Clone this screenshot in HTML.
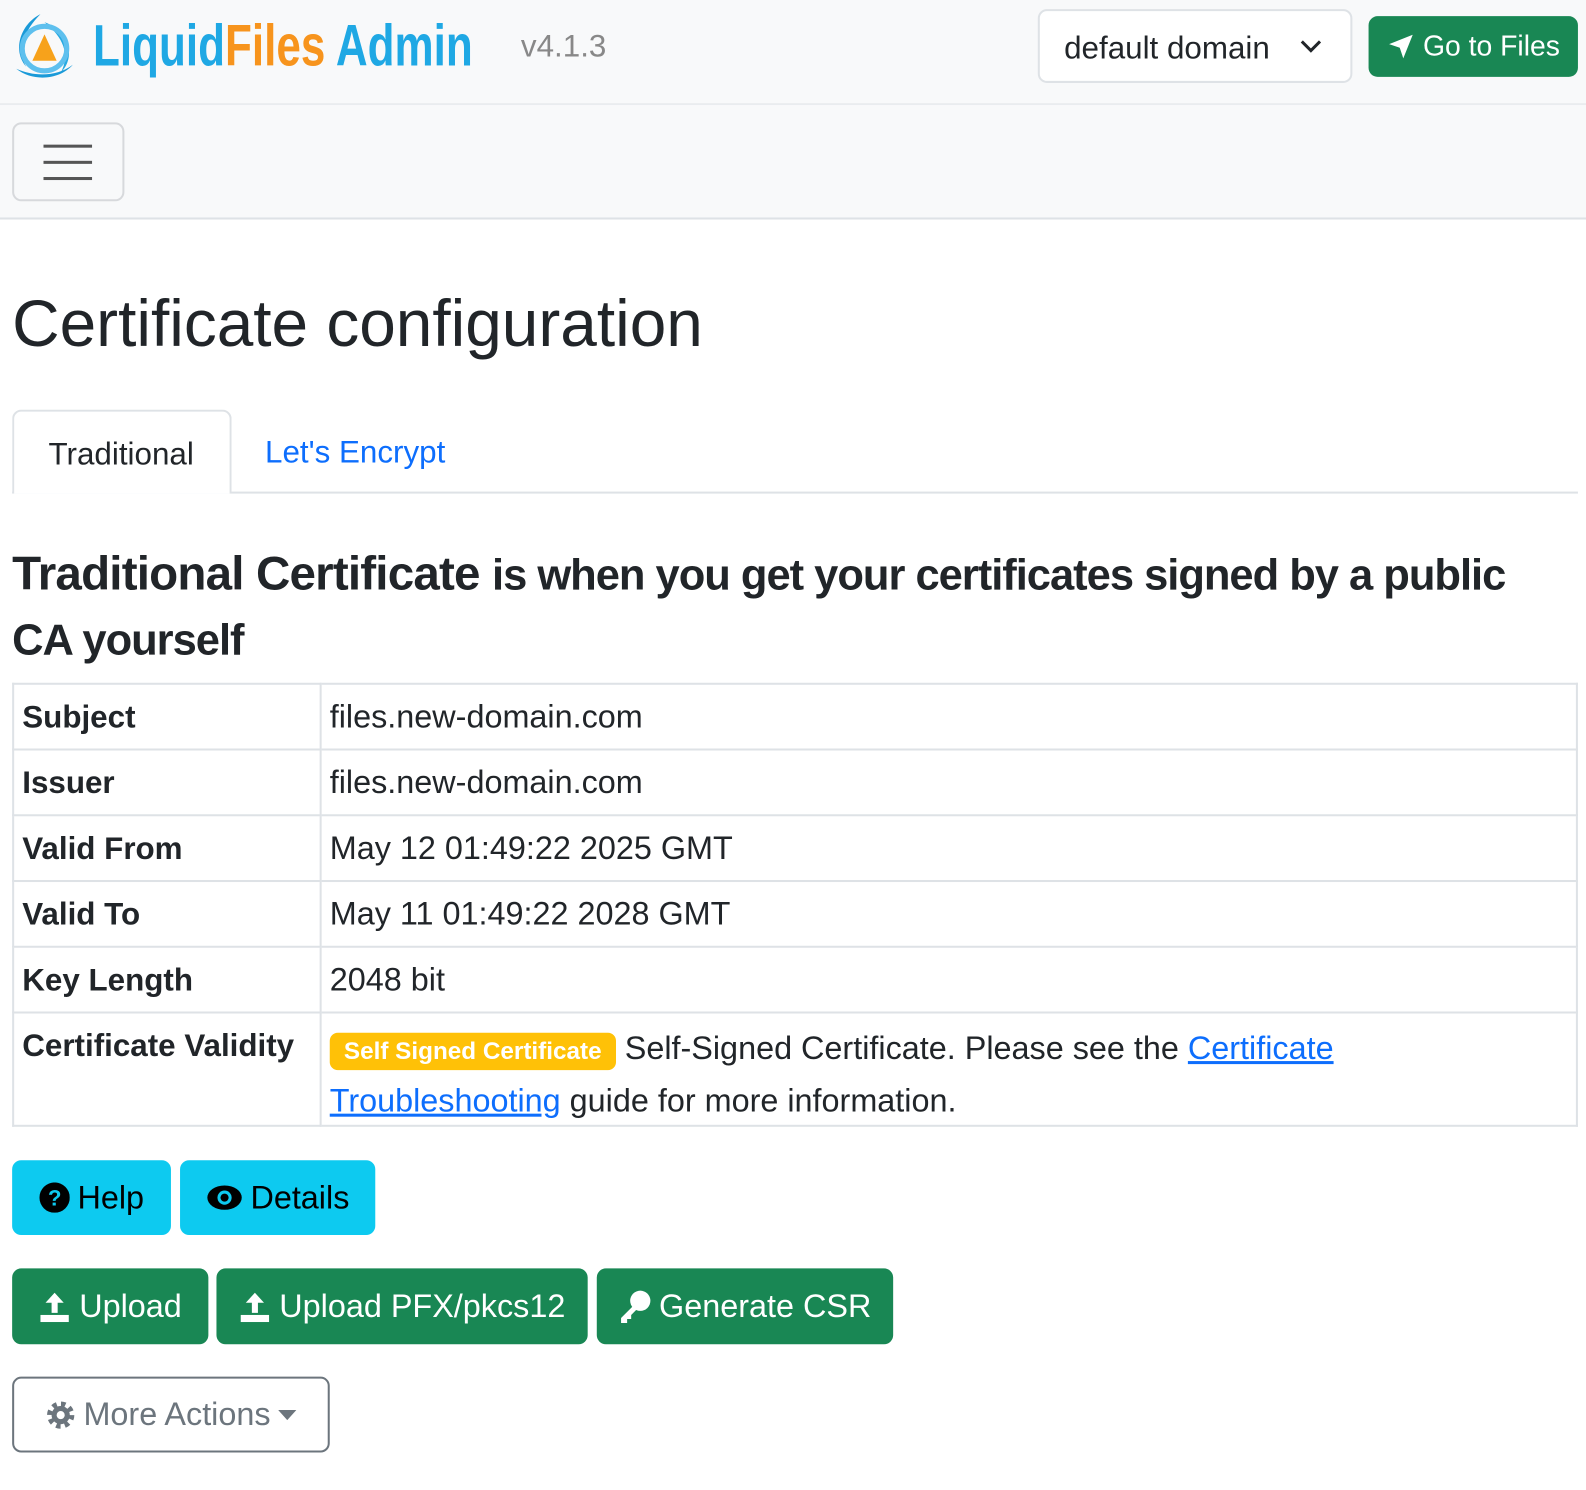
<!DOCTYPE html>
<html><head><meta charset="utf-8"><style>
*{box-sizing:border-box}
body{margin:0;width:1586px;height:1490px;background:#fff;font-family:"Liberation Sans",Helvetica,Arial,sans-serif;color:#212529;overflow:hidden;position:relative}
#w{position:absolute;left:0;top:0;width:1568px;height:1473px;transform:scale(1.0115);transform-origin:0 0}
.abs{position:absolute}
.hdr{left:0;top:0;width:1586px;height:104px;background:#f8f9fa;border-bottom:2px solid #e9ecef}
.nav2{left:0;top:104px;width:1586px;height:113px;background:#f8f9fa;border-bottom:2px solid #dee2e6}
.btn{position:absolute;border-radius:9px;font-size:32px;display:flex;align-items:center;justify-content:center;gap:8px}
.green{background:#198754;color:#fff}
.cyan{background:#0dcaf0;color:#000}
table{position:absolute;left:12px;top:675px;width:1548px;border-collapse:collapse;font-size:32px}
td{border:2px solid #dee2e6;padding:0 8px;height:65px;vertical-align:middle}
td.k{font-weight:bold;width:304px;font-size:31px;white-space:nowrap}
a{color:#0d6efd}
</style></head><body><div id="w">
<div class="abs hdr"></div>
<svg class="abs" style="left:10px;top:10px" width="68" height="70" viewBox="0 0 68 70">
<path d="M30 4 C10 14 2 40 16 56 C6 40 14 20 30 4Z" fill="#1a9ad8"/>
<path d="M34 12 C58 20 66 46 50 62 C60 44 52 26 34 12Z" fill="#27a9e1"/>
<path d="M6 58 C24 72 50 68 62 54 C46 66 24 66 6 58Z" fill="#1a9ad8"/>
<circle cx="34" cy="38" r="22" fill="none" stroke="#5ec0ee" stroke-width="5"/>
<polygon points="34,24 46,50 22,50" fill="#f7a21b"/>
</svg>
<div class="abs" style="left:92px;top:12px;font-size:58px;font-weight:bold;color:#1fa8e4;transform:scaleX(0.75);transform-origin:0 0;white-space:nowrap">Liquid<span style="color:#f7941d">Files</span> Admin</div>
<div class="abs" style="left:515px;top:28px;font-size:31px;color:#888">v4.1.3</div>
<div class="abs" style="left:1026px;top:9px;width:311px;height:73px;background:#fff;border:2px solid #dee2e6;border-radius:9px;font-size:31px;padding:19px 24px">default domain<svg style="position:absolute;right:28px;top:28px" width="22" height="14" viewBox="0 0 22 14"><path d="M2 2l9 9 9-9" fill="none" stroke="#212529" stroke-width="3"/></svg></div>
<div class="btn green" style="left:1353px;top:16px;width:207px;height:60px;font-size:28px"><svg width="28" height="28" viewBox="0 0 24 24"><path d="M22 2L2 10l9 3 3 9z" fill="#fff"/></svg>Go to Files</div>
<div class="abs nav2"></div>
<div class="abs" style="left:12px;top:121px;width:111px;height:78px;border:2px solid #d7d9dc;border-radius:9px"></div>
<div class="abs" style="left:43px;top:143px;width:48px;height:3px;background:#555"></div>
<div class="abs" style="left:43px;top:159px;width:48px;height:3px;background:#555"></div>
<div class="abs" style="left:43px;top:175px;width:48px;height:3px;background:#555"></div>
<div class="abs" style="left:12px;top:282px;font-size:65px;font-weight:500">Certificate configuration</div>
<div class="abs" style="left:12px;top:486px;width:1548px;height:2px;background:#dee2e6"></div>
<div class="abs" style="left:12px;top:405px;width:217px;height:83px;background:#fff;border:2px solid #dee2e6;border-bottom:none;border-radius:9px 9px 0 0;font-size:31px;padding:24px 0 0 34px">Traditional</div>
<div class="abs" style="left:262px;top:429px;font-size:31px;color:#0d6efd">Let's Encrypt</div>
<div class="abs" style="left:12px;top:536px;width:1520px;font-size:47px;line-height:62px;font-weight:bold;letter-spacing:-0.8px">Traditional Certificate <span style="font-size:43px;letter-spacing:-1px">is when you get your certificates signed by a public CA yourself</span></div>
<table>
<tr><td class="k">Subject</td><td>files.new-domain.com</td></tr>
<tr><td class="k">Issuer</td><td>files.new-domain.com</td></tr>
<tr><td class="k">Valid From</td><td>May 12 01:49:22 2025 GMT</td></tr>
<tr><td class="k">Valid To</td><td>May 11 01:49:22 2028 GMT</td></tr>
<tr><td class="k">Key Length</td><td>2048 bit</td></tr>
<tr><td class="k" style="height:112px;vertical-align:top;padding-top:14px">Certificate Validity</td><td style="vertical-align:top;padding-top:10px;line-height:48px;padding-right:200px"><span style="background:#ffc107;color:#fff;font-weight:bold;font-size:24px;padding:5px 14px;border-radius:8px">Self Signed Certificate</span> Self-Signed Certificate. Please see the <a href="#">Certificate Troubleshooting</a> guide for more information.</td></tr>
</table>
<div class="btn cyan" style="left:12px;top:1147px;width:157px;height:74px"><svg width="30" height="30" viewBox="0 0 30 30"><circle cx="15" cy="15" r="15" fill="#000"/><text x="15" y="23" font-size="22" font-weight="bold" fill="#0dcaf0" text-anchor="middle" font-family="Liberation Sans">?</text></svg>Help</div>
<div class="btn cyan" style="left:178px;top:1147px;width:193px;height:74px"><svg width="36" height="26" viewBox="0 0 36 26"><ellipse cx="18" cy="13" rx="17" ry="12" fill="#000"/><circle cx="18" cy="13" r="7" fill="#0dcaf0"/><circle cx="18" cy="13" r="4" fill="#000"/></svg>Details</div>
<div class="btn green" style="left:12px;top:1254px;width:194px;height:75px"><svg width="32" height="32" viewBox="0 0 32 32" fill="#fff"><path d="M16 2l9 10h-6v10h-6V12H7z"/><rect x="2" y="24" width="28" height="7"/></svg>Upload</div>
<div class="btn green" style="left:214px;top:1254px;width:367px;height:75px"><svg width="32" height="32" viewBox="0 0 32 32" fill="#fff"><path d="M16 2l9 10h-6v10h-6V12H7z"/><rect x="2" y="24" width="28" height="7"/></svg>Upload PFX/pkcs12</div>
<div class="btn green" style="left:590px;top:1254px;width:293px;height:75px"><svg width="32" height="34" viewBox="0 0 32 34" fill="#fff"><circle cx="21" cy="11" r="10"/><path d="M14 16L2 28v5h6v-4h4v-4l6-6z"/></svg>Generate CSR</div>
<div class="btn" style="left:12px;top:1361px;width:314px;height:75px;border:2px solid #6c757d;color:#6c757d"><svg width="30" height="30" viewBox="0 0 30 30"><circle cx="15" cy="15" r="10" fill="none" stroke="#6c757d" stroke-width="7" stroke-dasharray="4 3.85"/><circle cx="15" cy="15" r="9" fill="#6c757d"/><circle cx="15" cy="15" r="4" fill="#fff"/></svg>More Actions <svg width="18" height="10" viewBox="0 0 18 10"><path d="M0 0h18L9 10z" fill="#6c757d"/></svg></div>
</div></body></html>
